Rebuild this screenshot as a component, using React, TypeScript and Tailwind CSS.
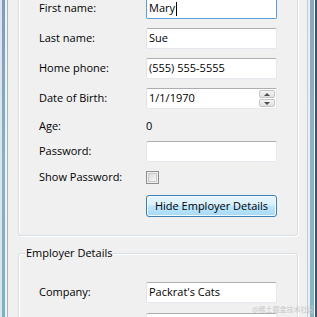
const FONT = "font-['Segoe_UI','Open_Sans',sans-serif]";

function TextBox({
  value,
  focused,
  spinner,
}: {
  value?: string;
  focused?: boolean;
  spinner?: boolean;
}) {
  return (
    <div
      className={`relative flex h-full w-[131px] items-center rounded-[2px] border bg-white pl-[2px] text-[11px] text-black ${
        focused
          ? "border-[#569de5] border-t-[#3d7bad]"
          : "border-[#e3e9ef] border-t-[#abadb3] border-l-[#e2e3ea]"
      }`}
    >
      <span>{value}</span>
      {focused && <span className="ml-px h-[14px] w-px bg-black" />}
      {spinner && (
        <div className="absolute right-[1px] top-px flex h-[17px] w-[16px] flex-col gap-px">
          <div className="flex flex-1 items-center justify-center rounded-[2px] border border-[#c5c5c5] bg-gradient-to-b from-[#f4f4f4] to-[#e1e1e1]">
            <span className="h-0 w-0 border-x-[3px] border-b-[3px] border-x-transparent border-b-[#4d4d4d]" />
          </div>
          <div className="flex flex-1 items-center justify-center rounded-[2px] border border-[#c5c5c5] bg-gradient-to-b from-[#f4f4f4] to-[#e1e1e1]">
            <span className="h-0 w-0 border-x-[3px] border-t-[3px] border-x-transparent border-t-[#4d4d4d]" />
          </div>
        </div>
      )}
    </div>
  );
}

function Row({
  label,
  className,
  children,
}: {
  label: string;
  className: string;
  children?: React.ReactNode;
}) {
  return (
    <div className={`flex items-center ${className}`}>
      <div className="w-[107px] text-[11px] text-black">{label}</div>
      {children}
    </div>
  );
}

export default function App() {
  return (
    <div className={`relative flex h-[317px] w-[317px] overflow-hidden bg-[#f0f0f0] ${FONT}`}>
      {/* left window frame */}
      <div className="flex h-full w-[8px] flex-none">
        <div className="w-[2px] bg-[#dbe5ee]" />
        <div className="w-[3px] bg-gradient-to-b from-[#7e9bbb] via-[#8aaec4] to-[#7fb1bd]" />
        <div className="w-[2px] bg-[#eef3f6]" />
        <div className="w-px bg-[#a9b6c2]" />
      </div>

      <div className="flex h-full flex-1 flex-col pl-[10px] pr-[9px]">
        {/* personal group */}
        <div className="mt-[-12px] flex flex-col rounded-[3px] border border-[#d5dfe5] pb-[18px] pl-[20px] pt-[9px] shadow-[1px_1px_0_#ffffff,inset_1px_1px_0_#ffffff]">
          <Row label="First name:" className="h-[21px]">
            <TextBox value="Mary" focused />
          </Row>
          <Row label="Last name:" className="mt-[9px] h-[21px]">
            <TextBox value="Sue" />
          </Row>
          <Row label="Home phone:" className="mt-[9px] h-[21px]">
            <TextBox value="(555) 555-5555" />
          </Row>
          <Row label="Date of Birth:" className="mt-[9px] h-[21px]">
            <TextBox value="1/1/1970" spinner />
          </Row>
          <Row label="Age:" className="mt-[7px] h-[21px]">
            <span className="text-[11px] text-black">0</span>
          </Row>
          <Row label="Password:" className="mt-[4px] h-[21px]">
            <TextBox />
          </Row>
          <Row label="Show Password:" className="mt-[5px] h-[21px]">
            <div className="h-[13px] w-[13px] border border-[#8f8f8f] p-px">
              <div className="h-full w-full border border-[#c9c9c9] bg-gradient-to-br from-[#dcdcdc] to-[#f8f8f8]" />
            </div>
          </Row>
          <div className="mt-[7px] flex h-[22px] pl-[107px]">
            <button
              type="button"
              className="flex h-full w-[131px] items-center justify-center rounded-[3px] border border-[#3c7fb1] bg-[linear-gradient(#e6f5fc_0%,#d9f0fc_45%,#bee6fd_50%,#a7d9f5_100%)] text-[11px] text-black shadow-[inset_0_0_0_1px_#f2fafe]"
            >
              Hide Employer Details
            </button>
          </div>
        </div>

        {/* employer group */}
        <div className="relative mt-[17px] flex flex-col rounded-[3px] border border-[#d5dfe5] pl-[20px] pt-[28px] shadow-[1px_1px_0_#ffffff,inset_1px_1px_0_#ffffff]">
          <div className="absolute left-[6px] top-[-9px] bg-[#f0f0f0] px-[1px] text-[11px] text-black">
            Employer Details
          </div>
          <Row label="Company:" className="h-[21px]">
            <TextBox value="Packrat's Cats" />
          </Row>
          <Row label="" className="mt-[10px] h-[21px]">
            <TextBox />
          </Row>
        </div>
      </div>

      {/* right window frame */}
      <div className="flex h-full w-[10px] flex-none">
        <div className="w-px bg-[#c3ccd4]" />
        <div className="w-[2px] bg-[#e9eff3]" />
        <div className="w-[4px] bg-gradient-to-b from-[#8ba6c2] via-[#8fb3c6] to-[#86b7c3]" />
        <div className="w-px bg-[#f3f7f9]" />
        <div className="w-[2px] bg-[#3e5568]" />
      </div>

      <div className="pointer-events-none absolute left-[252px] top-[305px] whitespace-nowrap font-['Noto_Sans_CJK_SC',sans-serif] text-[7px] leading-[8px] text-[#c8c8c8]">
        @稀土掘金技术社区
      </div>
    </div>
  );
}
